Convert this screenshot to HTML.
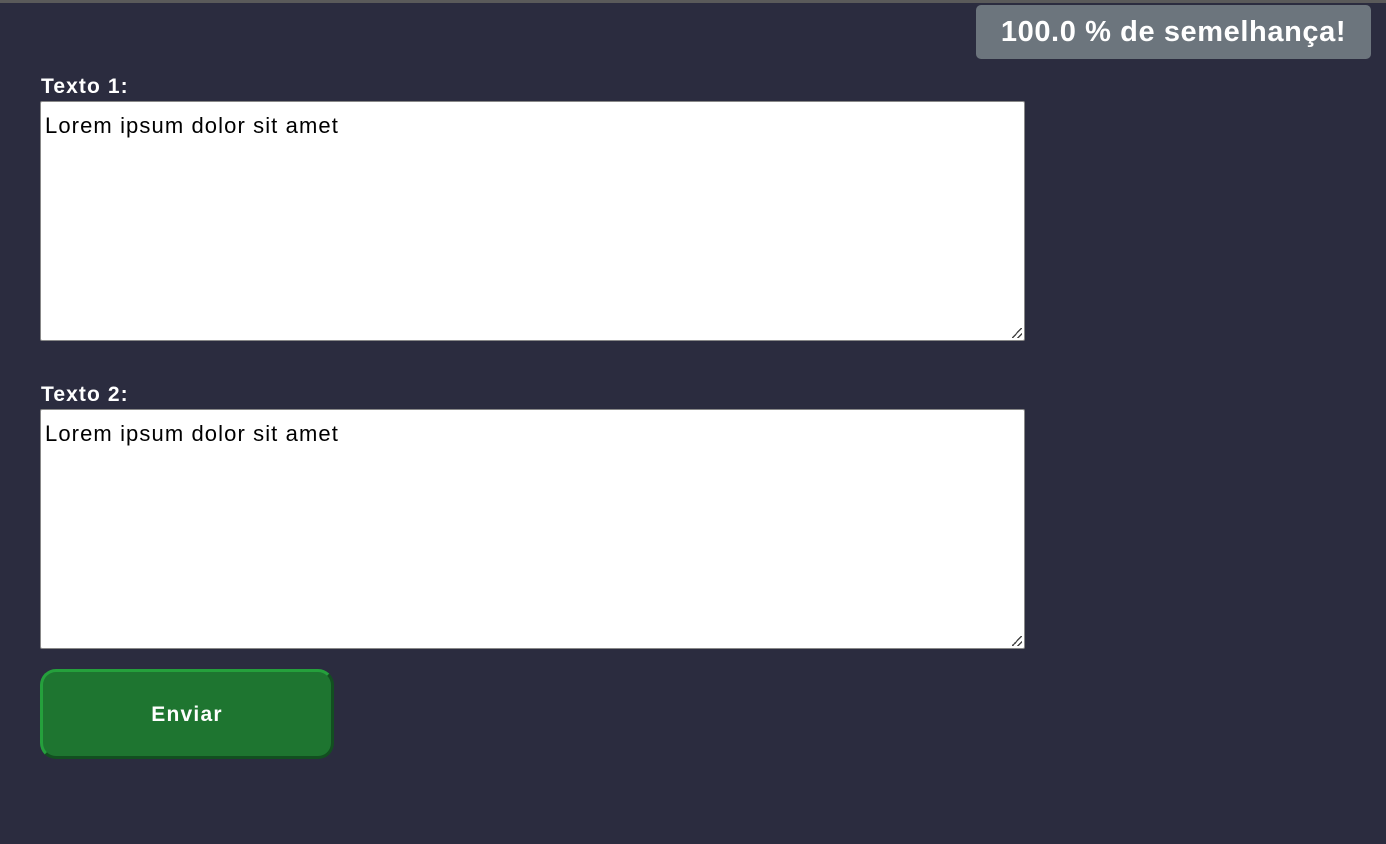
<!DOCTYPE html>
<html><head><meta charset="utf-8"><style>
html,body{margin:0;padding:0}
body{width:1386px;height:844px;background:#2b2c3f;font-family:"Liberation Sans",sans-serif;position:relative;overflow:hidden;border-top:3px solid #5a5a5a;box-sizing:border-box}
.badge{position:absolute;left:976px;top:2px;width:395px;height:54px;background:#6c757d;border-radius:5px;color:#fff;font-weight:bold;font-size:29px;letter-spacing:0.6px;line-height:54px;text-align:center}
.lbl{position:absolute;left:41px;color:#fff;font-weight:bold;font-size:21px;letter-spacing:1.1px}
.ta{position:absolute;left:40px;width:985px;height:240px;background:#fff;border:1px solid #888;box-sizing:border-box;border-radius:2px;font-size:22px;letter-spacing:1.1px;padding:11px 4px;color:#000}
.btn{position:absolute;left:40px;top:666px;width:294px;height:90px;box-sizing:border-box;background:#1e7530;border:3px solid;border-color:#25a03c #124f20 #124f20 #25a03c;border-radius:16px;color:#fff;font-weight:bold;font-size:21px;letter-spacing:1.2px;text-align:center;line-height:86px}
.grip{position:absolute;right:2px;bottom:2px;width:10px;height:10px;background:linear-gradient(135deg,transparent 45%,#444 45%,#444 55%,transparent 55%,transparent 75%,#444 75%,#444 85%,transparent 85%)}
</style></head><body>
<div class="badge">100.0 % de semelhança!</div>
<div class="lbl" style="top:72px">Texto 1:</div>
<div class="ta" style="top:98px">Lorem ipsum dolor sit amet<div class="grip"></div></div>
<div class="lbl" style="top:380px">Texto 2:</div>
<div class="ta" style="top:406px">Lorem ipsum dolor sit amet<div class="grip"></div></div>
<div class="btn">Enviar</div>
</body></html>
